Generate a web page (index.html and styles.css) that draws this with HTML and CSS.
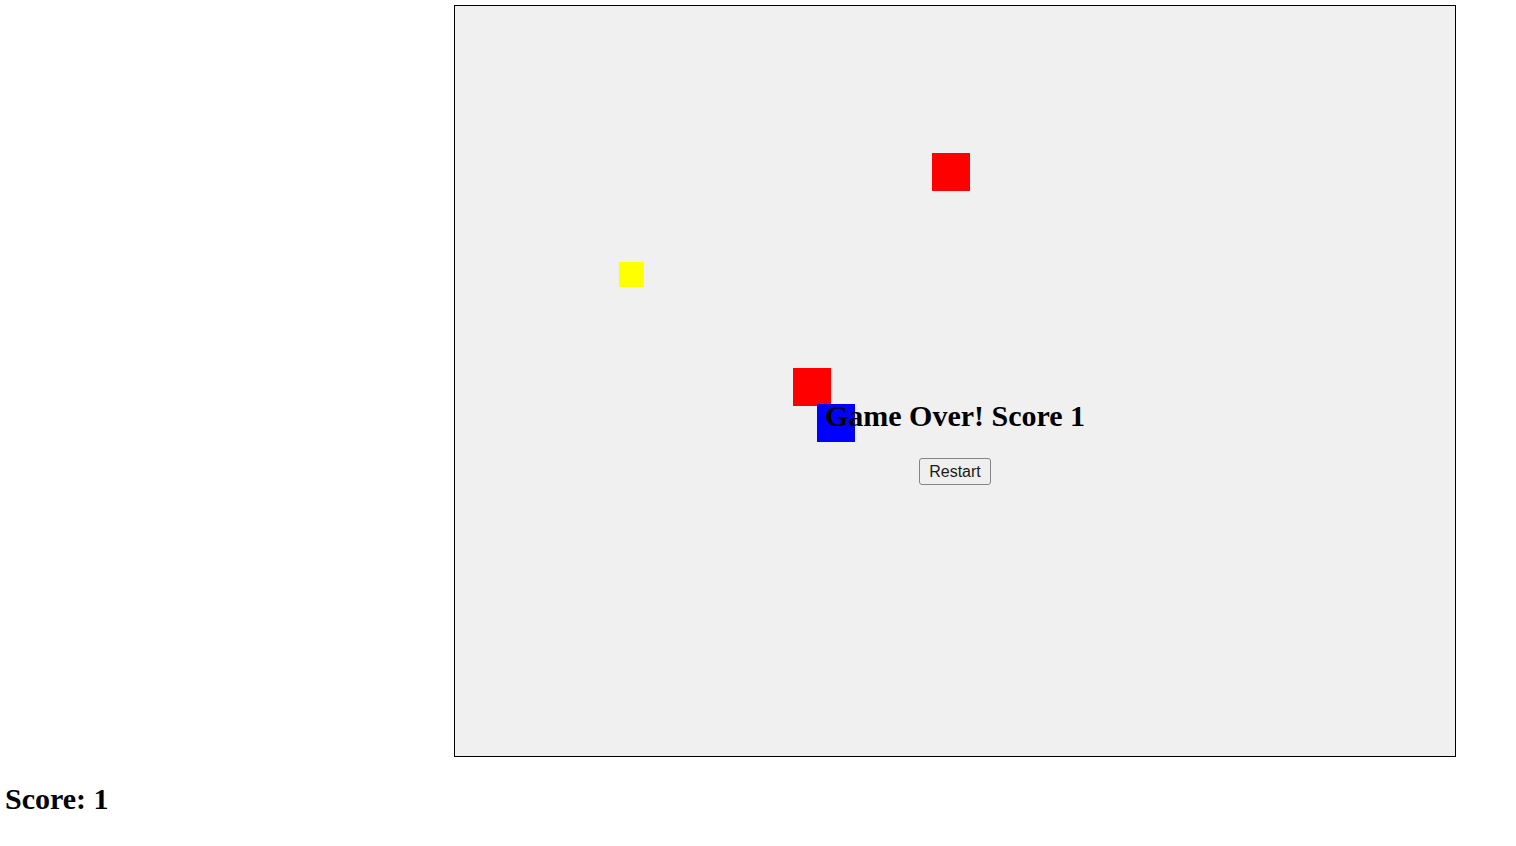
FILE: index.html
```html
<!DOCTYPE html>
<html>
<head>
<meta charset="utf-8">
<title>Game</title>
<link rel="stylesheet" href="styles.css">
</head>
<body>
<div class="page">
  <div class="game">
    <div class="sq enemy e1"></div>
    <div class="sq food"></div>
    <div class="sq enemy e2"></div>
    <div class="sq player"></div>
    <div class="overlay">
      <h2 class="over">Game Over! Score 1</h2>
      <button class="restart">Restart</button>
    </div>
  </div>
  <div class="score">Score: 1</div>
</div>
</body>
</html>
```
FILE: styles.css
```css
html, body {
  margin: 0;
  padding: 0;
  background: #ffffff;
}
.page {
  padding: 5px 0 0 0;
  font-family: "Liberation Serif", "Times New Roman", serif;
}
.game {
  position: relative;
  margin-left: 454px;
  width: 1000px;
  height: 750px;
  border: 1px solid #000000;
  background: #f0f0f0;
}
.sq {
  position: absolute;
}
.enemy {
  width: 38px;
  height: 38px;
  background: #ff0000;
}
.e1 { left: 477px; top: 147px; }
.e2 { left: 338px; top: 362px; }
.food {
  left: 164px;
  top: 256px;
  width: 25px;
  height: 25px;
  background: #ffff00;
}
.player {
  left: 362px;
  top: 398px;
  width: 38px;
  height: 38px;
  background: #0000ff;
}
.overlay {
  position: absolute;
  left: 0;
  right: 0;
  top: 393px;
  display: flex;
  flex-direction: column;
  align-items: center;
}
.over {
  margin: 0;
  font-size: 30px;
  line-height: 34px;
  font-weight: bold;
  color: #000000;
}
.restart {
  margin-top: 25px;
  height: 27px;
  padding: 0 9px;
  font-family: "Liberation Sans", Arial, sans-serif;
  font-size: 16px;
  color: #1a1a1a;
  background: #efefef;
  border: 1px solid #858585;
  border-radius: 3px;
}
.score {
  margin: 25px 0 0 5px;
  font-size: 30px;
  line-height: 34px;
  font-weight: bold;
}
```
